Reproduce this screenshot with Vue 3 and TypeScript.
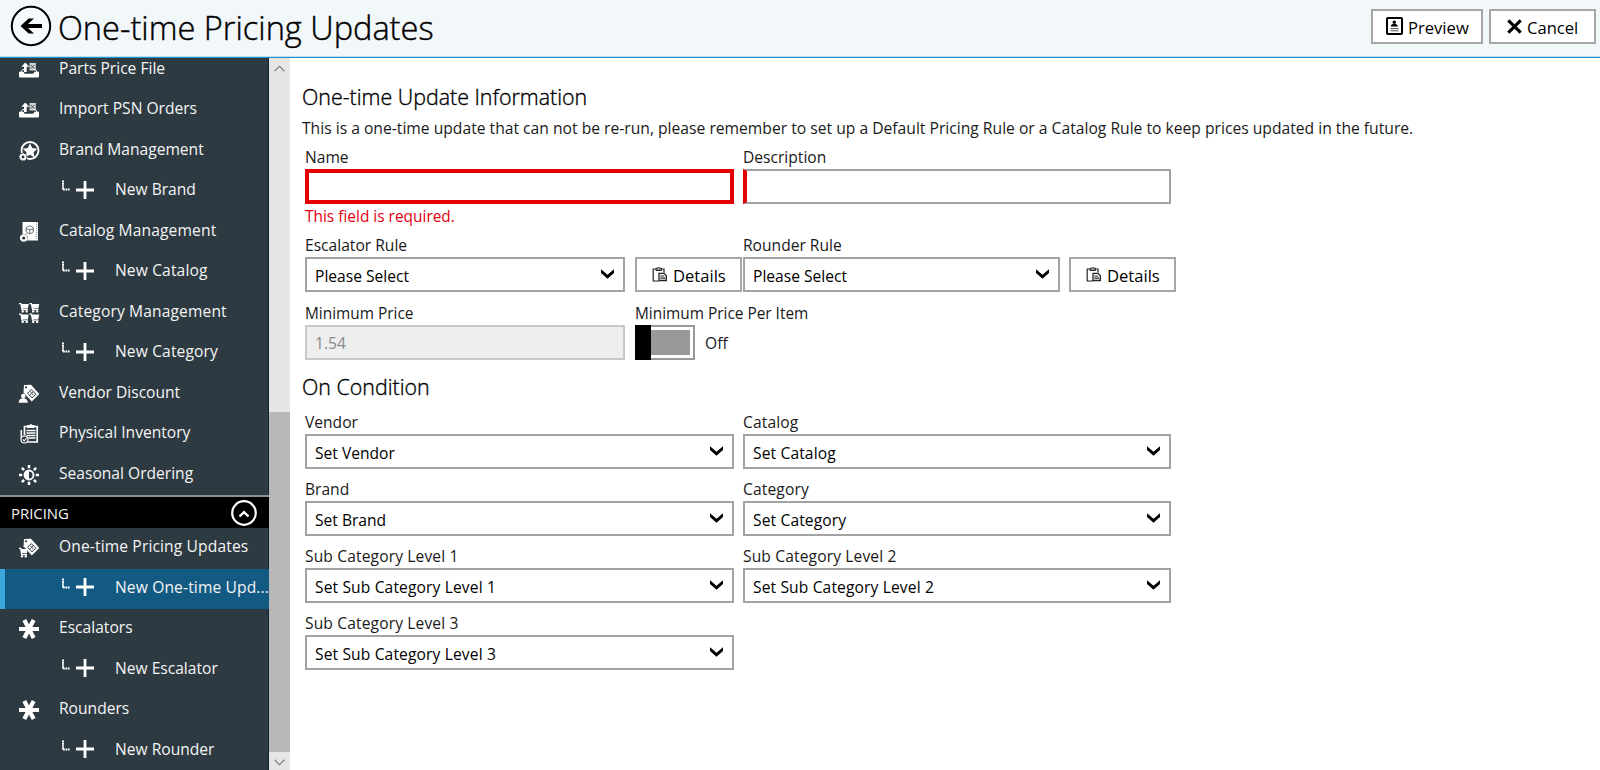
<script setup lang="ts">
interface NavItem {
  label: string
  icon?: string
  child?: boolean
  active?: boolean
  wide?: boolean
}

interface Choice {
  label: string
  value: string
  wide?: boolean
}

const inventory: NavItem[] = [
  { label: 'Parts Price File', icon: 'import' },
  { label: 'Import PSN Orders', icon: 'import' },
  { label: 'Brand Management', icon: 'brand' },
  { label: 'New Brand', child: true },
  { label: 'Catalog Management', icon: 'catalog', wide: true },
  { label: 'New Catalog', child: true, wide: true },
  { label: 'Category Management', icon: 'carts', wide: true },
  { label: 'New Category', child: true, wide: true },
  { label: 'Vendor Discount', icon: 'vendor' },
  { label: 'Physical Inventory', icon: 'clipboard' },
  { label: 'Seasonal Ordering', icon: 'season' },
]

const pricing: NavItem[] = [
  { label: 'One-time Pricing Updates', icon: 'pricetag', wide: true },
  { label: 'New One-time Upd...', child: true, active: true, wide: true },
  { label: 'Escalators', icon: 'asterisk' },
  { label: 'New Escalator', child: true },
  { label: 'Rounders', icon: 'asterisk' },
  { label: 'New Rounder', child: true },
]

const groups = [
  { title: '', items: inventory },
  { title: 'PRICING', items: pricing },
]

const conditions: Choice[] = [
  { label: 'Vendor', value: 'Set Vendor' },
  { label: 'Catalog', value: 'Set Catalog', wide: true },
  { label: 'Brand', value: 'Set Brand' },
  { label: 'Category', value: 'Set Category', wide: true },
  { label: 'Sub Category Level 1', value: 'Set Sub Category Level 1', wide: true },
  { label: 'Sub Category Level 2', value: 'Set Sub Category Level 2', wide: true },
  { label: 'Sub Category Level 3', value: 'Set Sub Category Level 3', wide: true },
]
</script>

<template>
  <div class="page">
    <header class="topbar">
      <svg class="back" viewBox="0 0 42 42">
        <circle cx="21" cy="21" r="19.2" fill="#fff" fill-opacity=".35" stroke="#000" stroke-width="2" />
        <path d="M10.5 21 18.6 13.4H24L18 19.100H32v3.900H18L24 28.6h-5.400z" />
      </svg>
      <h1>One-time Pricing Updates</h1>
      <div class="actions">
        <button class="btn preview">
          <svg viewBox="0 0 17 18">
            <rect x="1" y="1" width="15" height="16" rx=".8" fill="#fff" stroke="#000" stroke-width="2" />
            <circle cx="8.3" cy="5.3" r="1.7" />
            <path d="M4.8 9.6c0-2 1.6-2.6 3.5-2.6s3.5.6 3.5 2.6z" />
            <path d="M4.5 11.6h8M4.5 13.8h8" stroke="#555" stroke-width="1" />
          </svg>
          <span>Preview</span>
        </button>
        <button class="btn cancel">
          <svg viewBox="0 0 15 15"><path d="M1.3 1.300l12.400 12.400M13.700 1.300l-12.400 12.400" stroke="#000" stroke-width="3.1" /></svg>
          <span>Cancel</span>
        </button>
      </div>
    </header>

    <div class="body">
      <nav class="sidebar">
        <section v-for="group in groups" :key="group.title">
          <div v-if="group.title" class="group-title">
            <span>{{ group.title }}</span>
            <svg viewBox="0 0 26 26">
              <circle cx="13" cy="13" r="11.8" fill="none" stroke="#fff" stroke-width="2.2" />
              <path d="M8.5 16.500 13 12.200 17.5 16.500" fill="none" stroke="#fff" stroke-width="2.4" />
            </svg>
          </div>
          <a
            v-for="item in group.items"
            :key="item.label"
            class="nav-item"
            :class="{ child: item.child, active: item.active, wide: item.wide }"
          >
            <template v-if="item.child">
              <svg class="corner" viewBox="0 0 8 11">
                <path d="M1 .5V10" fill="none" stroke="#fff" stroke-width="2" stroke-dasharray="1.5 .4" />
                <path d="M1 9.5h7" fill="none" stroke="#fff" stroke-width="2" stroke-dasharray="1.8 .6" />
              </svg>
              <svg class="plus" viewBox="0 0 18 18"><path d="M9 0v18M0 9h18" stroke="#fff" stroke-width="2.8" /></svg>
            </template>
            <svg v-else class="icon" viewBox="0 0 20 20">
              <g v-if="item.icon === 'import'" fill="#fff">
                <path d="M0 11.700h4.500l1.300 2h8.400l1.300-2H20v4.500q0 1.200-1.200 1.200H1.200Q0 17.400 0 16.200z" />
                <path d="M2 12 3.500 9.500H5M18 12l-1.500-2.500H15" stroke="#fff" stroke-width="1" fill="none" />
                <path d="M6.300 2.500 10.300 6.800H7.700V12H5V6.800H2.300z" />
                <path d="M10.500 3h6.300v7.500h-6.300z" opacity=".8" />
                <path d="M11.500 4.800l4 4M15.500 4.800l-4 4" stroke="#2e3a42" stroke-width=".9" />
              </g>
              <g v-else-if="item.icon === 'brand'" fill="#fff">
                <circle cx="11" cy="9.500" r="8.500" fill="none" stroke="#fff" stroke-width="1.900" />
                <path d="M11 2.300l2.200 4.800 5.200.6-3.900 3.500 1.100 5.200L11 13.700 6.400 16.400l1.100-5.200-3.900-3.500 5.200-.6z" />
                <circle cx="4" cy="16" r="4.300" fill="#2e3a42" />
                <circle cx="4" cy="16" r="2.400" fill="none" stroke="#fff" stroke-width="1.900" />
                <circle cx="4" cy="16" r="3.500" fill="none" stroke="#fff" stroke-width=".9" stroke-dasharray="1.3 1.370" />
              </g>
              <g v-else-if="item.icon === 'catalog'" fill="#fff">
                <path d="M3.500 0H19v18.500H3.500z" />
                <path d="M17.700 0v18" stroke="#2e3a42" stroke-width=".6" stroke-dasharray="1 1" />
                <circle cx="10.700" cy="7.800" r="3.900" fill="none" stroke="#4b565d" stroke-width=".8" />
                <path d="M6.800 7.300h7.800M10.700 8v3.700" stroke="#4b565d" stroke-width=".8" />
                <circle cx="4.700" cy="16" r="4" fill="#2e3a42" />
                <circle cx="4.700" cy="16" r="2.700" fill="none" stroke="#fff" stroke-width="2.200" />
              </g>
              <g v-else-if="item.icon === 'carts'" fill="#fff">
                <g v-for="n in 4" :key="n" :transform="`translate(${((n - 1) % 2) * 10.5} ${n > 2 ? 10.5 : 0})`">
                  <path d="M0 0h2.300l.6 1h6.900L8.800 5.400H3.800l.2.700h5v1.200H2.500L1.400 1.300H0z" />
                  <circle cx="3.700" cy="8.400" r="1.200" />
                  <circle cx="7.700" cy="8.400" r="1.200" />
                </g>
              </g>
              <g v-else-if="item.icon === 'vendor' || item.icon === 'pricetag'" fill="#fff">
                <path d="M5 1 12 .8 20.300 10 12.800 17.600 4.500 8.600z" />
                <circle cx="7" cy="3.300" r="1.100" fill="#2e3a42" />
                <path d="M12.300 5.600 16.800 10.200 13 13.900 8.700 9.200z" fill="none" stroke="#2e3a42" stroke-width="1" />
                <path d="M10.800 11l3.700-3.500M11.700 7.800l2.500 3.500" stroke="#2e3a42" stroke-width=".8" />
                <template v-if="item.icon === 'vendor'">
                  <path d="M3 9.500 9.500 18.500H0V13z" fill="#2e3a42" />
                  <circle cx="4.300" cy="12" r="2.300" />
                  <path d="M-.3 18.800q0-4.600 4.500-4.600t4.600 4.600z" />
                </template>
                <template v-else>
                  <path d="M0 9h5l4.500 5v5H0z" fill="#2e3a42" />
                  <path d="M0 9.700h2.200l.6 1.400h6L7.900 15H3v.7h5v1.200H2L1.100 11H0z" />
                  <circle cx="3" cy="18.300" r="1.200" />
                  <circle cx="6.800" cy="18.300" r="1.200" />
                </template>
              </g>
              <g v-else-if="item.icon === 'clipboard'" fill="#fff">
                <path d="M5.500 2.500h12.700v15.500H5.500z" fill="none" stroke="#fff" stroke-width="1.700" />
                <path d="M8 1h2.500q1.300-2 2.600 0h2.400v3H8z" />
                <path d="M7.500 6.500h9M7.500 9h9M7.500 11.500h9M9 14h7.500" stroke="#fff" stroke-width="1.400" />
                <path d="M2.300 6v9" stroke="#fff" stroke-width="1.600" />
                <circle cx="5.500" cy="15.500" r="4.200" fill="#2e3a42" />
                <circle cx="5.500" cy="15.500" r="3.500" fill="none" stroke="#fff" stroke-width="1.200" />
                <path d="M3.800 15.300 5.300 17l2.300-3" fill="none" stroke="#fff" stroke-width="1.100" />
              </g>
              <g v-else-if="item.icon === 'season'" fill="#fff">
                <circle cx="10" cy="10" r="4.500" fill="none" stroke="#fff" stroke-width="1.900" />
                <path d="M10 5a5 5 0 0 0 0 10z" />
                <path
                  d="M10 0v3.200M10 16.800V20M0 10h3.200M16.800 10H20M2.900 2.900l2.200 2.200M14.900 14.900l2.200 2.200M2.900 17.100l2.200-2.200M14.900 5.100l2.200-2.200"
                  stroke="#fff"
                  stroke-width="2.500"
                />
              </g>
              <path
                v-else
                d="M0 10h20M5.300 1l9.400 18M14.700 1l-9.400 18"
                stroke="#fff"
                stroke-width="4.200"
              />
            </svg>
            <span class="nav-label">{{ item.label }}</span>
          </a>
        </section>
      </nav>
      <div class="scrollbar">
        <svg viewBox="0 0 10 6"><path d="M.5 5.500 5 1l4.500 4.500" fill="none" stroke="#7d7d7d" stroke-width="1" /></svg>
        <div class="thumb"></div>
        <svg viewBox="0 0 10 6"><path d="M.5.5 5 5 9.500.5" fill="none" stroke="#7d7d7d" stroke-width="1" /></svg>
      </div>

      <main class="content">
        <h2>One-time Update Information</h2>
        <p class="intro">
          This is a one-time update that can not be re-run, please remember to set up a Default Pricing Rule or a Catalog
          Rule to keep prices updated in the future.
        </p>

        <div class="grid names">
          <div class="field">
            <label>Name</label>
            <div class="box invalid"></div>
            <div class="error">This field is required.</div>
          </div>
          <div class="field">
            <label>Description</label>
            <div class="box required"></div>
          </div>
        </div>

        <div class="grid rules">
          <div v-for="rule in ['Escalator Rule', 'Rounder Rule']" :key="rule" class="rule">
            <div class="field">
              <label>{{ rule }}</label>
              <div class="box">
                <span>Please Select</span>
                <svg class="chevron" viewBox="0 0 13 10"><path d="M0 .3 6.500 5.800 13 .3V4L6.500 9.800 0 4z" /></svg>
              </div>
            </div>
            <button class="btn details">
              <svg viewBox="0 0 15 15">
                <path d="M4 2H1.200v12H7M9.500 2H12v3.500" fill="none" stroke="#222" stroke-width="1.200" />
                <path d="M4 1.200h1.500q1.200-1.900 2.400 0h1.600v2.300H4z" fill="#999" stroke="#222" stroke-width="1" />
                <path d="M7 6.300h5l2.300 2.200V13.500H7z" fill="#fff" stroke="#222" stroke-width="1.300" />
                <path d="M8.300 9h4M8.300 11.200h5" stroke="#222" stroke-width="1.200" />
              </svg>
              <span>Details</span>
            </button>
          </div>
        </div>

        <div class="minimum">
          <div class="field">
            <label>Minimum Price</label>
            <div class="box disabled"><span>1.54</span></div>
          </div>
          <div class="field">
            <label>Minimum Price Per Item</label>
            <div class="switch-row">
              <div class="switch"><i class="knob"></i><i class="track"></i></div>
              <span>Off</span>
            </div>
          </div>
        </div>

        <h2 class="second">On Condition</h2>
        <div class="grid">
          <div v-for="c in conditions" :key="c.label" class="field" :class="{ wide: c.wide }">
            <label>{{ c.label }}</label>
            <div class="box">
              <span>{{ c.value }}</span>
              <svg class="chevron" viewBox="0 0 13 10"><path d="M0 .3 6.500 5.800 13 .3V4L6.500 9.800 0 4z" /></svg>
            </div>
          </div>
        </div>
      </main>
    </div>
  </div>
</template>

<style>
body {
  margin: 0;
  background: #fff;
}
</style>

<style scoped>
* {
  box-sizing: border-box;
}
.page {
  width: 1600px;
  height: 770px;
  display: flex;
  flex-direction: column;
  overflow: hidden;
  font-family: 'Open Sans', 'Noto Sans', sans-serif;
  font-size: 15.6px;
  line-height: 22px;
  color: #1a1a1a;
}
svg {
  display: block;
  flex: none;
}
h1,
h2,
p {
  margin: 0;
}
.topbar {
  flex: none;
  height: 58px;
  display: flex;
  align-items: flex-start;
  padding: 0 4px 0 10px;
  background: #f2f7fa;
  border-bottom: 1px solid #1995d3;
  box-shadow: inset 0 -1px #bcdcec;
}
.back {
  width: 42px;
  height: 42px;
  margin-top: 5px;
}
h1 {
  margin: 6px 0 0 6px;
  font-size: 32.55px;
  line-height: 44px;
  font-weight: 300;
  color: #000;
  -webkit-text-stroke: 0.4px #000;
}
.actions {
  display: flex;
  gap: 6px;
  margin: 9px 0 0 auto;
}
.btn {
  display: flex;
  align-items: center;
  height: 35px;
  padding: 0;
  border: 2px solid #a6a6a6;
  background: #fff;
  font: inherit;
  font-size: 16.6px;
  line-height: 30px;
  color: #000;
}
.btn span {
  padding-top: 2px;
}
.preview {
  width: 112px;
  padding-left: 13px;
  gap: 5px;
}
.preview svg {
  width: 17px;
  height: 18px;
  margin-top: -1px;
}
.cancel {
  width: 107px;
  padding-left: 16px;
  gap: 5px;
}
.cancel svg {
  width: 15px;
  height: 15px;
  margin-top: -1px;
}
.body {
  flex: 1;
  min-height: 0;
  display: flex;
}
.sidebar {
  flex: none;
  width: 269px;
  display: flex;
  flex-direction: column;
  justify-content: flex-end;
  overflow: hidden;
  background: linear-gradient(to left, #10242f 1px, #2e3a42 1px);
  color: #f4f4f4;
}
.sidebar section:last-child {
  margin-bottom: -1px;
}
.nav-item {
  display: flex;
  align-items: center;
  height: 40.5px;
  padding-left: 18.5px;
}
.icon {
  width: 20px;
  height: 20px;
  margin-right: 20.5px;
  overflow: visible;
}
.nav-label {
  white-space: nowrap;
  padding-bottom: 4px;
}
.child {
  padding-left: 62px;
}
.corner {
  width: 8px;
  height: 11px;
  margin: 0 6px 11px 0;
}
.plus {
  width: 18px;
  height: 18px;
  margin: 0 21px 3px 0;
}
.wide {
  letter-spacing: 0.13px;
}
.active {
  background: #125a82;
  box-shadow: inset 5px 0 #3aa8dc;
}
.group-title {
  display: flex;
  align-items: center;
  justify-content: space-between;
  height: 33px;
  border-top: 2px solid #8b9296;
  background: #000;
  padding: 0 12px 0 11px;
  font-size: 14.9px;
}
.group-title svg {
  width: 26px;
  height: 26px;
}
.scrollbar {
  flex: none;
  width: 20.5px;
  display: flex;
  flex-direction: column;
  align-items: center;
  background: #e6e6e6;
}
.scrollbar svg {
  width: 11px;
  height: 7px;
  margin-top: 7px;
}
.thumb {
  width: 100%;
  height: 340px;
  margin-top: 340px;
  background: #b8b8b8;
}
.content {
  flex: 1;
  min-width: 0;
  padding: 25px 0 0 12.5px;
}
h2 {
  font-size: 21.4px;
  font-weight: 300;
  line-height: 28px;
  color: #000;
  -webkit-text-stroke: 0.35px #000;
}
.intro {
  white-space: nowrap;
  font-size: 15.67px;
  line-height: 22px;
  margin-top: 6px;
}
.grid,
.minimum {
  display: grid;
  grid-template-columns: 429px 428px;
  column-gap: 9px;
  margin-left: 3px;
}
.names {
  margin-top: -2px;
  height: 88px;
}
.field {
  padding-top: 9px;
}
.field label {
  display: block;
  margin-bottom: 1px;
  line-height: 22px;
}
.box {
  display: flex;
  align-items: center;
  justify-content: space-between;
  height: 35px;
  padding: 0 9.5px 0 8px;
  border: 2px solid #a3a3a3;
  background: #fff;
  color: #000;
}
.box span {
  padding-top: 2px;
}
.invalid {
  border: 4px solid #e30000;
}
.required {
  border-left: 4px solid #e30000;
}
.error {
  color: #e3000f;
  font-size: 15.45px;
  padding-top: 1px;
  line-height: 22px;
}
.chevron {
  width: 13px;
  height: 10px;
  margin-bottom: 1px;
}
.rule {
  display: grid;
  grid-template-columns: 320px 107px;
  column-gap: 10px;
  align-items: end;
}
.rule:last-child {
  grid-template-columns: 317px 107px;
  column-gap: 9px;
}
.details {
  padding-left: 15px;
  gap: 6px;
}
.details svg {
  width: 15px;
  height: 15px;
}
.minimum {
  margin-top: 1px;
  grid-template-columns: 320px 220px;
  column-gap: 10px;
}
.minimum label {
  font-size: 15.4px;
  padding-top: 1px;
  margin-bottom: 0;
}
.disabled {
  background: #eee;
  border-color: #c8c8c8;
  color: #8a8a8a;
}
.disabled span {
  padding-top: 1px;
}
.switch-row {
  display: flex;
  align-items: center;
  gap: 10px;
}
.switch {
  width: 60px;
  height: 35px;
  display: flex;
  background: #fff;
  border: 2px solid #999;
  border-left: 0;
}
.knob {
  width: 16px;
  margin: -2px 0;
  background: #000;
}
.track {
  flex: 1;
  margin: 3px 3px 3px 0;
  background: #999;
}
.second {
  margin: 13px 0 1px;
}
</style>
